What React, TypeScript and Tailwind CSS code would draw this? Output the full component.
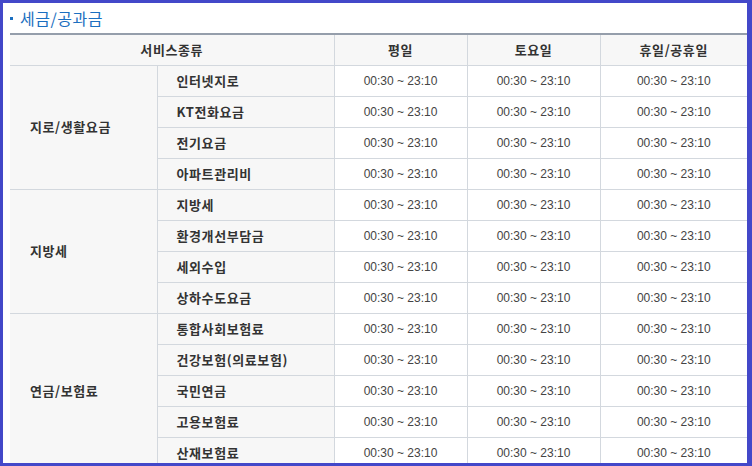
import React from 'react'

const TIME = '00:30 ~ 23:10'

const GROUPS = [
  { name: '지로/생활요금', items: ['인터넷지로', 'KT전화요금', '전기요금', '아파트관리비'] },
  { name: '지방세', items: ['지방세', '환경개선부담금', '세외수입', '상하수도요금'] },
  { name: '연금/보험료', items: ['통합사회보험료', '건강보험(의료보험)', '국민연금', '고용보험료', '산재보험료'] },
]

const KO = { fontFamily: '"Noto Sans CJK KR", "Noto Sans", sans-serif' }

export default function App() {
  return (
    <div
      className="h-[466px] w-[752px] overflow-hidden border-t-[3px] border-r-[5px] border-b-[3px] border-l-[3px] border-[#4348c9] bg-white"
      style={KO}
    >
      {/* Title */}
      <div className="flex h-[30px] items-center pl-[7px]">
        <span className="mr-[7px] h-[3px] w-[3px] bg-[#1b6fc0]" />
        <h2 className="text-[16px] leading-none tracking-[0.5px] text-[#1b6fc0]">세금/공과금</h2>
      </div>

      {/* Table */}
      <div className="ml-[7px] overflow-hidden">
        <table className="w-[750px] table-fixed border-collapse border-t-2 border-[#959eab] text-[13px] tracking-[0.6px]">
          <colgroup>
            <col className="w-[147px]" />
            <col className="w-[177px]" />
            <col className="w-[133px]" />
            <col className="w-[133px]" />
            <col className="w-[160px]" />
          </colgroup>
          <thead>
            <tr className="h-[31px] bg-[#f7f7f7] font-bold text-[#333]">
              <th colSpan={2} className="border-r border-b border-[#d3d8de] font-bold">서비스종류</th>
              <th className="border-r border-b border-[#d3d8de] font-bold">평일</th>
              <th className="border-r border-b border-[#d3d8de] font-bold">토요일</th>
              <th className="border-b border-[#d3d8de] pr-[13px] font-bold">휴일/공휴일</th>
            </tr>
          </thead>
          <tbody>
            {GROUPS.map((g) =>
              g.items.map((item, i) => (
                <tr key={g.name + item} className="h-[31px]">
                  {i === 0 && (
                    <td
                      rowSpan={g.items.length}
                      className="border-r border-b border-[#d3d8de] bg-[#f7f7f7] pl-[20px] font-bold text-[#333]"
                    >
                      {g.name}
                    </td>
                  )}
                  <td className="border-r border-b border-[#d3d8de] bg-[#f7f7f7] pl-[19px] font-bold text-[#333]">
                    {item}
                  </td>
                  <td className="border-r border-b border-[#d3d8de] text-center font-['Liberation_Sans',sans-serif] text-[12px] tracking-normal text-[#444]">
                    {TIME}
                  </td>
                  <td className="border-r border-b border-[#d3d8de] text-center font-['Liberation_Sans',sans-serif] text-[12px] tracking-normal text-[#444]">
                    {TIME}
                  </td>
                  <td className="border-b border-[#d3d8de] pr-[13px] text-center font-['Liberation_Sans',sans-serif] text-[12px] tracking-normal text-[#444]">
                    {TIME}
                  </td>
                </tr>
              ))
            )}
          </tbody>
        </table>
      </div>
    </div>
  )
}
